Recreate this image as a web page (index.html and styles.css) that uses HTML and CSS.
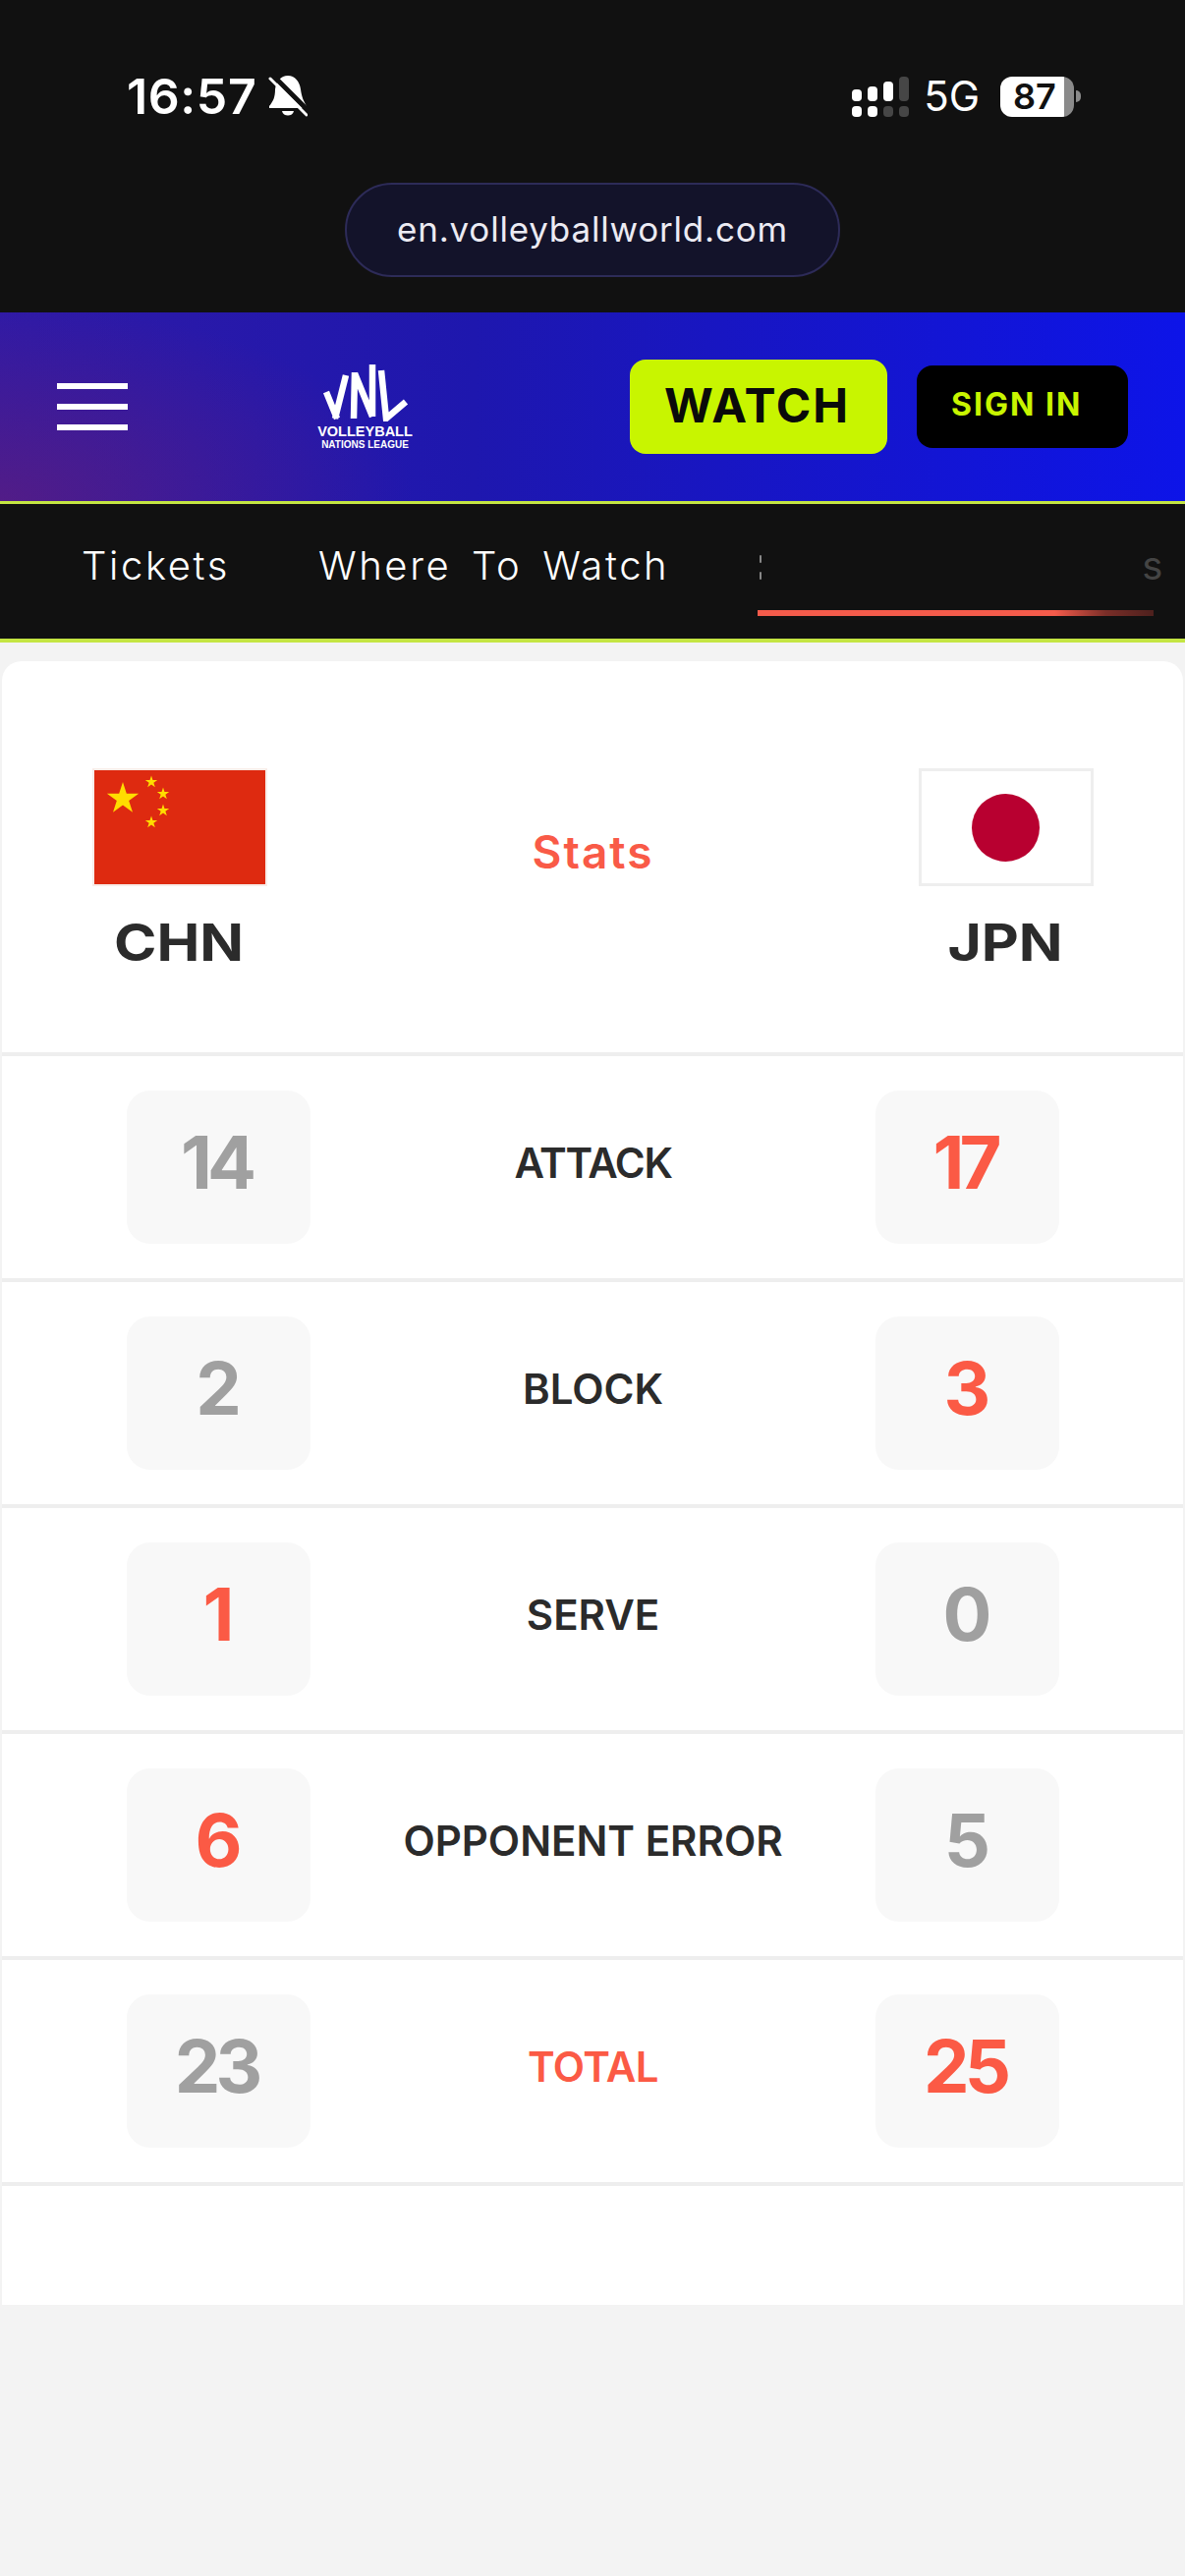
FILE: index.html
```html
<!DOCTYPE html>
<html lang="en">
<head>
    <meta charset="UTF-8">
    <meta name="viewport" content="width=device-width, initial-scale=1.0">
    <title>VNL Match Stats</title>
    <link rel="stylesheet" href="styles.css">
</head>
<body>

    <div class="top">
        <div class="status">
            <div class="status-left">
                <span class="time">16:57</span>
                <svg class="bell" viewBox="0 0 40 42">
                    <path d="M20 0C27 0 32 6 33 14C34 22 36 26 39 31L39 33H1L1 31C5 26 7 22 7 14C8 6 13 0 20 0Z" fill="#fff"/>
                    <path d="M14 36H26C25 42 15 42 14 36Z" fill="#fff"/>
                    <path d="M5 0L43 38" stroke="#111" stroke-width="5"/>
                    <path d="M2 3L39 40" stroke="#fff" stroke-width="3" stroke-linecap="round"/>
                </svg>
            </div>
            <div class="status-right">
                <div class="signal">
                    <div class="signal-col"><i class="s-top s1"></i><i class="s-dot"></i></div>
                    <div class="signal-col"><i class="s-top s2"></i><i class="s-dot"></i></div>
                    <div class="signal-col"><i class="s-top s3"></i><i class="s-dot dim"></i></div>
                    <div class="signal-col"><i class="s-top s4 dim"></i><i class="s-dot dim"></i></div>
                </div>
                <span class="net">5G</span>
                <div class="battery"><span class="battery-level">87</span><i class="battery-nub"></i></div>
            </div>
        </div>
        <div class="url-pill">en.volleyballworld.com</div>
    </div>

    <header>
        <div class="burger"><i></i><i></i><i></i></div>
        <div class="logo">
            <svg class="logo-mark" viewBox="0 0 97 62">
                <path d="M9 32L20 59M29 15L18 59M38 12L37 59M38 13L56 57M56 4V57M65 10L70 59L90 42"/>
            </svg>
            <div class="logo-big">VOLLEYBALL</div>
            <div class="logo-small">NATIONS LEAGUE</div>
        </div>
        <div class="actions">
            <a class="btn-watch" href="#">WATCH</a>
            <a class="btn-signin" href="#">SIGN IN</a>
        </div>
    </header>

    <nav>
        <a class="tab" href="#">Tickets</a>
        <a class="tab" href="#">Where To Watch</a>
        <div class="tab-active">
            <div class="tab-hidden">
                <div class="frag"><i></i><i></i></div>
                <span class="tail">s</span>
            </div>
            <div class="tab-line"></div>
        </div>
    </nav>

    <main>
        <section class="card">
            <div class="teams">
                <div class="team">
                    <svg class="flag flag-chn" viewBox="0 0 174 116">
                        <defs><polygon id="star" points="0,-1 .225,-.309 .951,-.309 .363,.118 .588,.809 0,.382 -.588,.809 -.363,.118 -.951,-.309 -.225,-.309"/></defs>
                        <rect width="174" height="116" fill="#de2a10"/>
                        <use href="#star" transform="translate(29 29) scale(17)" fill="#ffdd00"/>
                        <use href="#star" transform="translate(58 12) scale(6.5)" fill="#ffdd00"/>
                        <use href="#star" transform="translate(70 24) scale(6.5)" fill="#ffdd00"/>
                        <use href="#star" transform="translate(70 41) scale(6.5)" fill="#ffdd00"/>
                        <use href="#star" transform="translate(58 53) scale(6.5)" fill="#ffdd00"/>
                    </svg>
                    <div class="team-name">CHN</div>
                </div>
                <div class="teams-title">Stats</div>
                <div class="team">
                    <div class="flag flag-jpn"><i></i></div>
                    <div class="team-name">JPN</div>
                </div>
            </div>

            <div class="row">
                <div class="num">14</div><div class="label tight">ATTACK</div><div class="num win">17</div>
            </div>
            <div class="row">
                <div class="num">2</div><div class="label">BLOCK</div><div class="num win">3</div>
            </div>
            <div class="row">
                <div class="num win">1</div><div class="label">SERVE</div><div class="num">0</div>
            </div>
            <div class="row">
                <div class="num win">6</div><div class="label">OPPONENT ERROR</div><div class="num">5</div>
            </div>
            <div class="row">
                <div class="num">23</div><div class="label total">TOTAL</div><div class="num win">25</div>
            </div>
        </section>
    </main>

</body>
</html>
```

FILE: styles.css
```css
* {
    box-sizing: border-box;
}
body {
    font-family: 'Inter', 'Liberation Sans', sans-serif;
    background-color: #f3f3f3;
    color: #2b2b2b;
    margin: 0;
    min-height: 100vh;
}
a {
    text-decoration: none;
}
i {
    display: block;
}

/* phone status bar + url */
.top {
    background-color: #111;
    height: 318px;
    padding-top: 77px;
}
.status {
    display: flex;
    justify-content: space-between;
    align-items: center;
    height: 42px;
    padding: 0 113px 0 129px;
    color: white;
}
.status-left {
    display: flex;
    align-items: center;
    gap: 12px;
}
.time {
    font-size: 50px;
    font-weight: 600;
    letter-spacing: .6px;
    line-height: 42px;
}
.bell {
    width: 40px;
    height: 42px;
}
.status-right {
    display: flex;
    align-items: center;
}
.signal {
    display: flex;
    gap: 6px;
    height: 41px;
}
.signal-col {
    width: 10px;
    display: flex;
    flex-direction: column;
    justify-content: flex-end;
    gap: 5px;
}
.signal-col i {
    background-color: white;
    border-radius: 4px;
}
.signal-col i.dim {
    background-color: #464646;
}
.s-dot {
    height: 11px;
}
.s1 {
    height: 12px;
}
.s2 {
    height: 15px;
}
.s3 {
    height: 20px;
}
.s4 {
    height: 25px;
}
.net {
    margin-left: 15px;
    font-size: 42px;
    line-height: 42px;
    font-weight: 400;
}
.battery {
    position: relative;
    margin-left: 21px;
    width: 75px;
    height: 41px;
    border-radius: 12px;
    background: linear-gradient(90deg, white 65px, #8a8a8a 65px);
    color: #111;
}
.battery-level {
    display: block;
    padding-left: 13px;
    font-size: 36px;
    font-weight: 600;
    line-height: 41px;
}
.battery-nub {
    position: absolute;
    left: 77px;
    top: 14px;
    width: 5px;
    height: 12px;
    background-color: #8a8a8a;
    border-radius: 0 6px 6px 0;
}
.url-pill {
    width: 504px;
    height: 96px;
    margin: 67px auto 0;
    border: 2px solid #2d2b58;
    border-radius: 48px;
    background-color: #13132a;
    color: #ecebf3;
    font-size: 35px;
    line-height: 90px;
    text-align: center;
    letter-spacing: .8px;
}

/* site header */
header {
    display: flex;
    align-items: center;
    height: 195px;
    padding: 0 58px;
    background:
        radial-gradient(ellipse 420px 200px at 0 100%, rgba(110, 30, 110, .55), rgba(110, 30, 110, 0)),
        linear-gradient(90deg, #2f1aa6 0%, #1e17ae 40%, #0d14e8 100%);
    border-bottom: 3px solid #c4e542;
}
.burger {
    display: flex;
    flex-direction: column;
    gap: 15px;
    width: 72px;
}
.burger i {
    height: 6px;
    background-color: white;
}
.logo {
    margin-left: 193px;
    width: 97px;
    color: white;
    text-align: center;
    font-family: 'Liberation Sans', sans-serif;
    font-weight: 700;
}
.logo-mark {
    display: block;
    width: 97px;
    height: 62px;
    margin-top: -3px;
    filter: blur(.5px);
}
.logo-mark path {
    fill: none;
    stroke: white;
    stroke-width: 6.5;
}
.logo-big {
    font-size: 14.5px;
    line-height: 15px;
    margin-top: 3px;
}
.logo-small {
    font-size: 10px;
    line-height: 11px;
}
.actions {
    display: flex;
    align-items: center;
    gap: 30px;
    margin-left: auto;
}
.btn-watch {
    width: 262px;
    height: 96px;
    padding-left: 35px;
    border-radius: 16px;
    background-color: #c8f500;
    color: #0a0a0a;
    font-size: 48px;
    font-weight: 700;
    letter-spacing: 1.8px;
    line-height: 94px;
}
.btn-signin {
    width: 215px;
    height: 84px;
    padding-left: 35px;
    border-radius: 16px;
    background-color: black;
    color: #c8f500;
    font-size: 32px;
    font-weight: 700;
    letter-spacing: 2px;
    line-height: 80px;
}

/* section tabs */
nav {
    display: flex;
    gap: 90px;
    height: 141px;
    padding: 38px 0 0 83px;
    background-color: #111;
    border-bottom: 4px solid #c4e542;
}
.tab {
    color: white;
    font-size: 40px;
    letter-spacing: 2.6px;
    word-spacing: 7px;
    line-height: 50px;
    font-weight: 300;
}
.tab-active {
    width: 403px;
}
.tab-hidden {
    display: flex;
    justify-content: space-between;
    height: 50px;
    font-size: 40px;
    line-height: 50px;
}
.frag {
    width: 3px;
    padding: 14px 0 0 2px;
}
.frag i {
    width: 2px;
    height: 8px;
    margin-bottom: 9px;
    background-color: #888;
    border-radius: 1px;
}
.tail {
    margin-right: -9px;
    color: #444;
}
.tab-line {
    height: 6px;
    margin-top: 20px;
    background: linear-gradient(90deg, #f45b4b 75%, #7a2e28 88%, #4d201d 100%);
}

/* stats card */
main {
    padding: 19px 2px 0;
}
.card {
    background-color: white;
    border-radius: 20px 20px 0 0;
    padding-bottom: 121px;
}
.teams {
    display: flex;
    justify-content: space-between;
    height: 402px;
    padding: 109px 91px 0 92px;
    border-bottom: 4px solid #eee;
}
.team {
    width: 178px;
}
.flag {
    display: block;
    width: 178px;
    height: 120px;
    border-style: solid;
}
.flag-chn {
    border-width: 2px;
    border-color: #f8ece8;
}
.flag-jpn {
    display: flex;
    align-items: center;
    justify-content: center;
    border-width: 3px;
    border-color: #eee;
}
.flag-jpn i {
    width: 69px;
    height: 69px;
    border-radius: 50%;
    background-color: #b80030;
}
.team-name {
    margin: 28px 0 0 -2px;
    font-size: 52px;
    font-weight: 700;
    line-height: 60px;
    text-align: center;
    transform: scaleX(1.13);
}
.teams-title {
    margin-top: 60px;
    color: #f95a47;
    font-size: 46px;
    font-weight: 600;
    line-height: 50px;
    letter-spacing: 2px;
}
.row {
    display: grid;
    grid-template-columns: 187px 1fr 187px;
    align-items: center;
    padding: 35px 126px 35px 127px;
    border-bottom: 4px solid #eee;
}
.num {
    height: 156px;
    border-radius: 24px;
    background-color: #f8f8f8;
    color: #a0a0a0;
    font-size: 74px;
    font-weight: 700;
    letter-spacing: -5px;
    text-indent: -5px;
    line-height: 146px;
    text-align: center;
}
.num.win {
    color: #fb5a45;
}
.label {
    margin-top: -10px;
    font-size: 42px;
    font-weight: 600;
    text-align: center;
}
.label.tight {
    letter-spacing: -1.3px;
}
.label.total {
    color: #fb5a45;
    letter-spacing: -.5px;
}
```
